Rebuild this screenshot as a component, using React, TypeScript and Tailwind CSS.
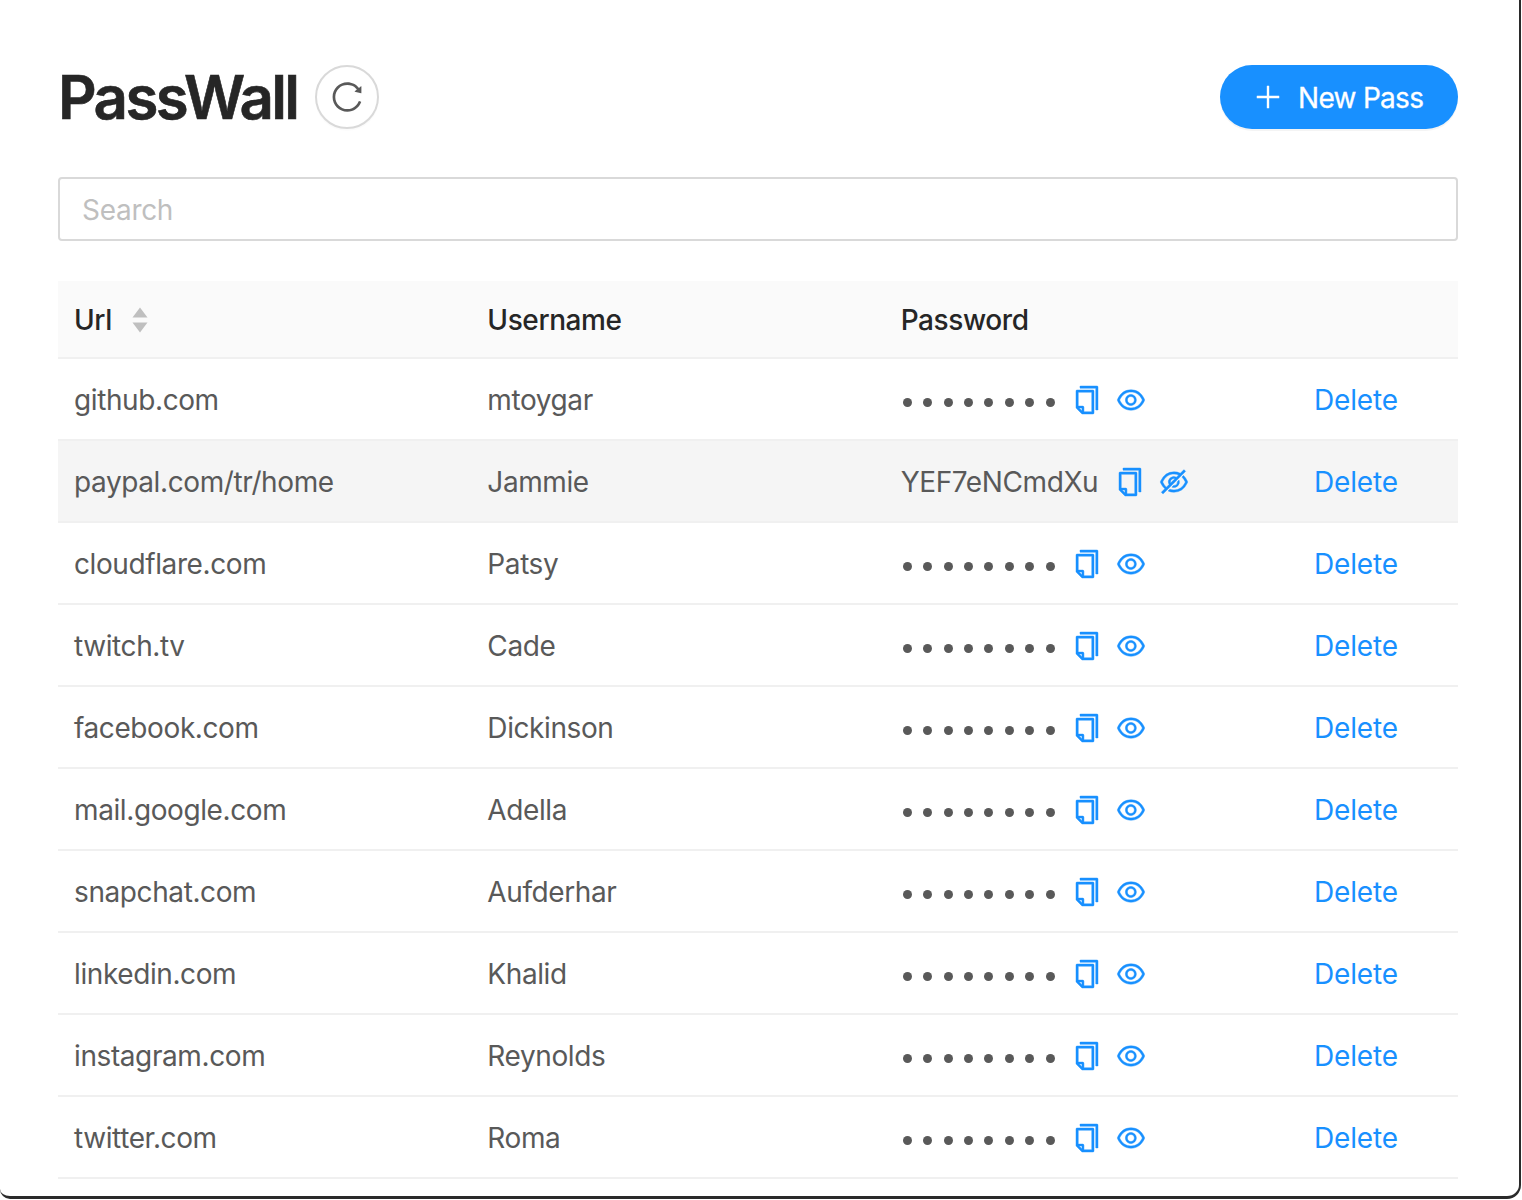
import React from 'react';
import {
  AiOutlineCopy,
  AiOutlineEye,
  AiOutlineEyeInvisible,
  AiOutlinePlus,
  AiOutlineReload,
} from 'react-icons/ai';

const rows = [
  { url: 'github.com', username: 'mtoygar' },
  { url: 'paypal.com/tr/home', username: 'Jammie', password: 'YEF7eNCmdXu' },
  { url: 'cloudflare.com', username: 'Patsy' },
  { url: 'twitch.tv', username: 'Cade' },
  { url: 'facebook.com', username: 'Dickinson' },
  { url: 'mail.google.com', username: 'Adella' },
  { url: 'snapchat.com', username: 'Aufderhar' },
  { url: 'linkedin.com', username: 'Khalid' },
  { url: 'instagram.com', username: 'Reynolds' },
  { url: 'twitter.com', username: 'Roma' },
];

const Dots = () => (
  <div className="flex items-center gap-[11.43px] pl-[2px] pr-[4px] mt-[4px]">
    {Array.from({ length: 8 }).map((_, i) => (
      <span key={i} className="block w-[9px] h-[9px] rounded-full bg-[#595959]" />
    ))}
  </div>
);

const SortCaret = () => (
  <svg width="16" height="26" viewBox="0 0 16 26" className="ml-[20px]">
    <path d="M8 0.5 L15.5 10.5 L0.5 10.5 Z" fill="#bfbfbf" />
    <path d="M8 25.5 L15.5 15.5 L0.5 15.5 Z" fill="#bfbfbf" />
  </svg>
);

export default function App() {
  return (
    <div className="w-[1521px] h-[1199px] bg-white border-r-[2px] border-b-[3px] border-[#2a2a2a] rounded-bl-[10px] rounded-br-[14px] pl-[58px] pr-[61px] pt-[65px] overflow-hidden font-['Inter',sans-serif]">
      {/* Header */}
      <div className="flex items-center justify-between h-16">
        <div className="flex items-center">
          <h1 className="text-[60px] leading-[64px] font-semibold text-[#262626] tracking-[-2.6px] [-webkit-text-stroke:0.6px_#262626]">PassWall</h1>
          <button className="ml-[18px] w-16 h-16 rounded-full bg-white border-2 border-[#d9d9d9] flex items-center justify-center text-[#595959] shadow-[0_2px_0_rgba(0,0,0,0.015)]">
            <AiOutlineReload size={36} />
          </button>
        </div>
        <button className="w-[238px] h-16 rounded-full bg-[#1890ff] text-white flex items-center pl-8 gap-[14px] text-[28px] tracking-[-0.7px] shadow-[0_2px_0_rgba(0,0,0,0.045)]">
          <AiOutlinePlus size={32} />
          <span className="pt-[2px] [-webkit-text-stroke:0.3px_#fff]">New Pass</span>
        </button>
      </div>

      {/* Search */}
      <input
        placeholder="Search"
        className="block w-full h-16 mt-12 px-[22px] pt-[2px] border-2 border-[#d9d9d9] rounded-[4px] text-[28px] tracking-[-0.3px] text-[#595959] placeholder:text-[#bfbfbf] outline-none"
      />

      {/* Table */}
      <div className="mt-10">
        <div className="grid grid-cols-[1fr_1fr_1fr_160px] items-center h-[78px] pt-[2px] bg-[#fafafa] border-b-2 border-[#f0f0f0] text-[28px] tracking-[-0.4px] font-medium text-[#262626]">
          <div className="flex items-center pl-4">
            <span>Url</span>
            <SortCaret />
          </div>
          <div className="pl-4">Username</div>
          <div className="pl-4">Password</div>
          <div />
        </div>
        {rows.map((row) => (
          <div
            key={row.url}
            className={`grid grid-cols-[1fr_1fr_1fr_160px] items-center h-[82px] border-b-2 border-[#f0f0f0] text-[28px] tracking-[-0.4px] text-[#595959] ${
              row.password ? 'bg-[#f5f5f5]' : 'bg-white'
            }`}
          >
            <div className="pl-4 pt-[2px]">{row.url}</div>
            <div className="pl-4 pt-[2px]">{row.username}</div>
            <div className="pl-4 pt-[2px] flex items-center">
              {row.password ? <span>{row.password}</span> : <Dots />}
              <AiOutlineCopy
                size={32}
                stroke="currentColor"
                strokeWidth={14}
                className={`text-[#1890ff] ${row.password ? 'ml-[16px]' : 'ml-[12px]'}`}
              />
              <span className="ml-3 text-[#1890ff]">
                {row.password ? (
                  <AiOutlineEyeInvisible size={32} stroke="currentColor" strokeWidth={14} />
                ) : (
                  <AiOutlineEye size={32} stroke="currentColor" strokeWidth={14} />
                )}
              </span>
            </div>
            <div className="pl-4 pt-[2px] tracking-[-0.15px] text-[#1890ff]">Delete</div>
          </div>
        ))}
      </div>
    </div>
  );
}
